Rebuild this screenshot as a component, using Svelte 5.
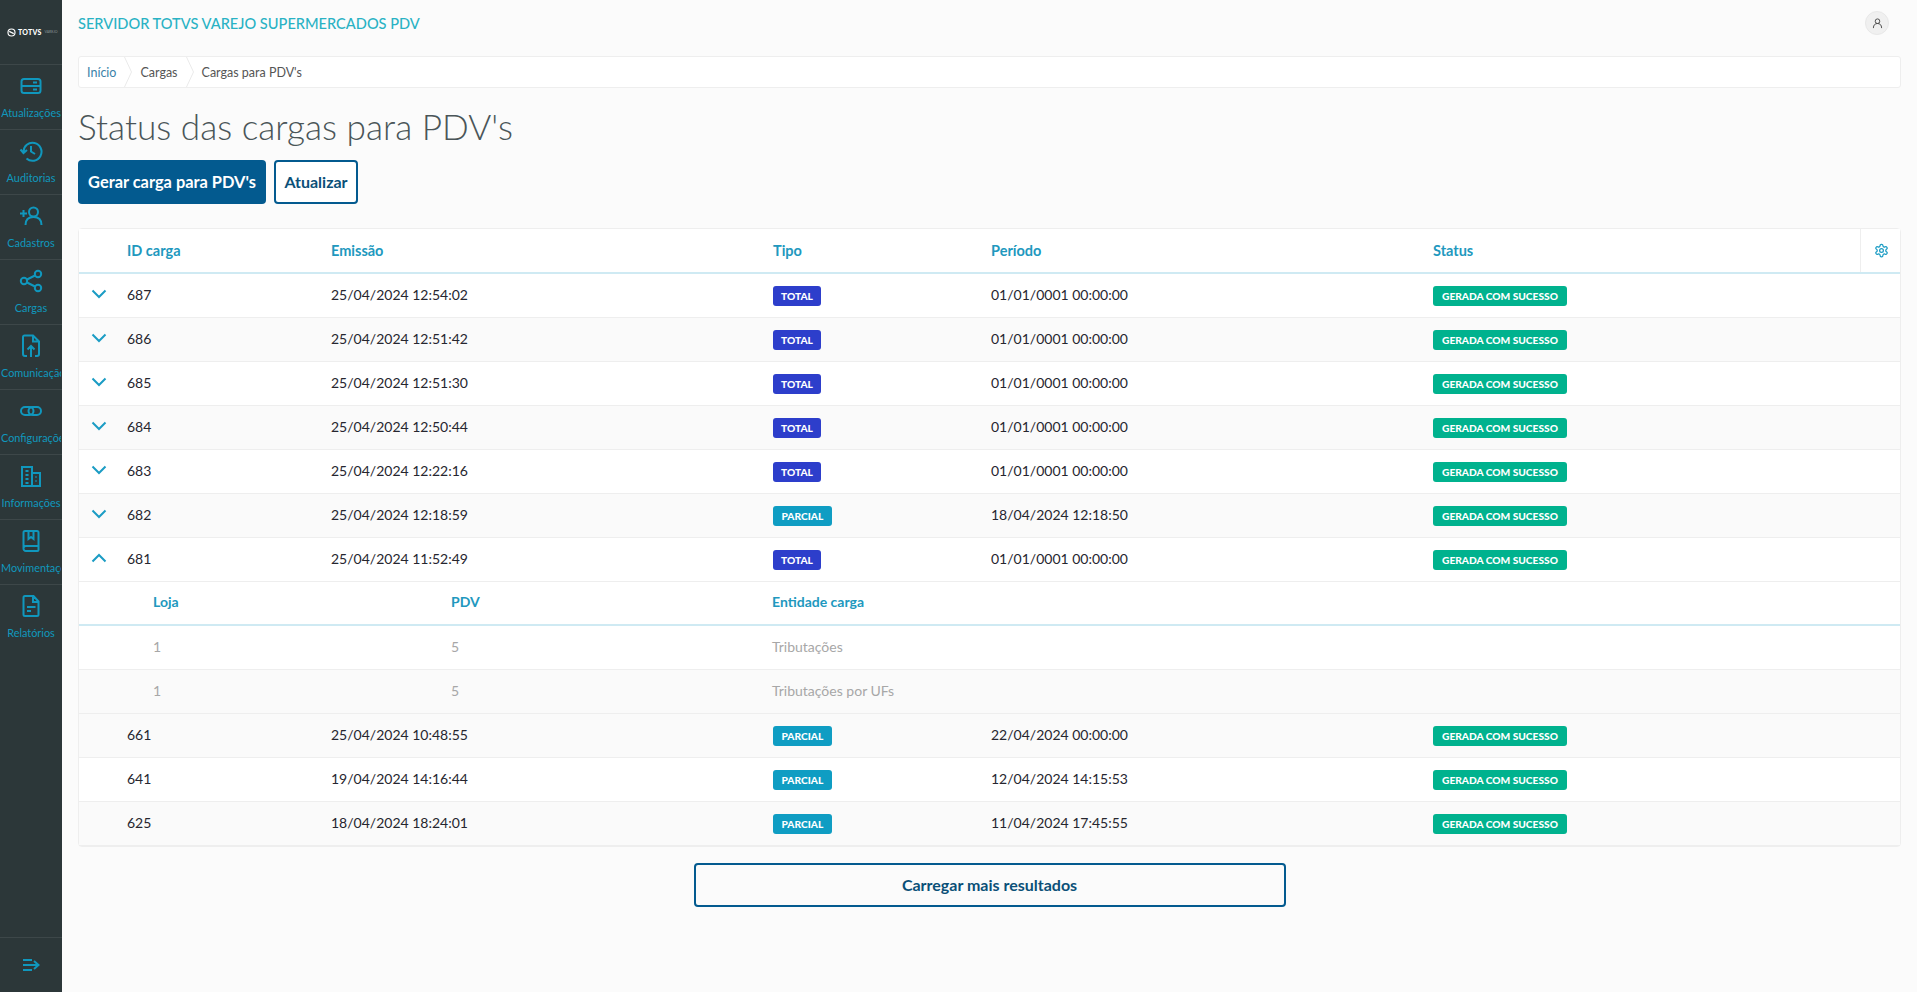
<script>
  const menu = [
    { label: 'Atualizações', icon: 'server' },
    { label: 'Auditorias', icon: 'history' },
    { label: 'Cadastros', icon: 'useradd' },
    { label: 'Cargas', icon: 'share' },
    { label: 'Comunicação PDV', icon: 'upload' },
    { label: 'Configurações', icon: 'link' },
    { label: 'Informações', icon: 'company' },
    { label: 'Movimentações', icon: 'book' },
    { label: 'Relatórios', icon: 'doc' }
  ];
  const before = [
    ['687', '25/04/2024 12:54:02', 'TOTAL', '01/01/0001 00:00:00'],
    ['686', '25/04/2024 12:51:42', 'TOTAL', '01/01/0001 00:00:00'],
    ['685', '25/04/2024 12:51:30', 'TOTAL', '01/01/0001 00:00:00'],
    ['684', '25/04/2024 12:50:44', 'TOTAL', '01/01/0001 00:00:00'],
    ['683', '25/04/2024 12:22:16', 'TOTAL', '01/01/0001 00:00:00'],
    ['682', '25/04/2024 12:18:59', 'PARCIAL', '18/04/2024 12:18:50']
  ];
  const after = [
    ['661', '25/04/2024 10:48:55', 'PARCIAL', '22/04/2024 00:00:00'],
    ['641', '19/04/2024 14:16:44', 'PARCIAL', '12/04/2024 14:15:53'],
    ['625', '18/04/2024 18:24:01', 'PARCIAL', '11/04/2024 17:45:55']
  ];
</script>

{#snippet cells(r)}
  <div class="cell">{r[0]}</div>
  <div class="cell">{r[1]}</div>
  <div class="cell"><span class="tag" class:parcial={r[2] === 'PARCIAL'}>{r[2]}</span></div>
  <div class="cell">{r[3]}</div>
  <div class="cell"><span class="tag ok">GERADA COM SUCESSO</span></div>
{/snippet}

{#snippet chevron(up)}
  <svg class="chev" viewBox="0 0 16 10" width="16" height="10" fill="none" stroke="#1b9cc4" stroke-width="2">
    <path d={up ? 'M1.500 8.500 8 2l6.500 6.500' : 'M1.500 1.500 8 8l6.500-6.500'} />
  </svg>
{/snippet}

{#snippet sep()}
  <svg class="sep" viewBox="0 0 8 30" width="8" height="30" fill="none" stroke="#eaeaea" stroke-width="1"><path d="M0.500 0 7.500 15 .5 30"/></svg>
{/snippet}

<div class="app">
  <aside class="side">
    <div class="logo">
      <svg viewBox="0 0 12 12" width="9" height="9" fill="none" stroke="#fff" stroke-width="1.500"><circle cx="6" cy="6" r="4.700"/><path d="M3 4.500 9 7.500"/></svg>
      <span class="logo-a">TOTVS</span><span class="logo-b">VAREJO</span>
    </div>
    {#each menu as m}
      <div class="item">
        <svg class="mi" viewBox="0 0 24 24" width="24" height="24" fill="none" stroke="#1097bd" stroke-width="2">
          {#if m.icon === 'server'}
            <rect x="2.500" y="5" width="19" height="14" rx="2.500"/><path d="M3 12h18M14 8.500h4M14 15.500h4"/>
          {:else if m.icon === 'history'}
            <path d="M4.500 13A9 9 0 1 1 7.500 19.500M1.500 10.500 4.500 14l3.500-3M12 7v5.500l4 2.500"/>
          {:else if m.icon === 'useradd'}
            <circle cx="14.500" cy="8" r="4.500"/><path d="M6.500 21c0-5 3-8 8-8s8 3 8 8M1 9.500h7M4.500 6v7"/>
          {:else if m.icon === 'share'}
            <circle cx="5" cy="12" r="3.200"/><circle cx="19" cy="5" r="3.200"/><circle cx="19" cy="19" r="3.200"/><path d="M8 10.500 16 6.500M8 13.500l8 4"/>
          {:else if m.icon === 'upload'}
            <path d="M8 22H6a2 2 0 0 1-2-2V3a1.500 1.500 0 0 1 1.500-1.500H14l6 6V20a2 2 0 0 1-2 2h-2M14 2v5.500h6M12 23v-11M8.500 15.500 12 12l3.500 3.500"/>
          {:else if m.icon === 'link'}
            <rect x="2" y="8" width="12.500" height="8" rx="4"/><rect x="9.500" y="8" width="12.500" height="8" rx="4"/>
          {:else if m.icon === 'company'}
            <path d="M3 22V3h10v19M13 9h8v13M2 22h20M6.500 7h3M6.500 11h3M6.500 15h3M6.500 19h3M16.500 13h1M16.500 17h1"/>
          {:else if m.icon === 'book'}
            <path d="M4.500 19V3.500a1.500 1.500 0 0 1 1.500-1.500h12a1.500 1.500 0 0 1 1.500 1.500V21a1 1 0 0 1-1 1H7a2.500 2.500 0 0 1-2.500-3 2.500 2.500 0 0 1 2.500-2h12.500M9.500 2v8l2.500-2 2.500 2V2"/>
          {:else}
            <path d="M4.500 3.500A1.500 1.500 0 0 1 6 2h8.500l5 5.500V20.500a1.500 1.500 0 0 1-1.500 1.500H6a1.500 1.500 0 0 1-1.500-1.500zM14 2v6h5.500M8 13h8.500M8 17h4"/>
          {/if}
        </svg>
        <div class="lbl">{m.label}</div>
      </div>
    {/each}
    <div class="collapse">
      <svg viewBox="0 0 18 12" width="18" height="12" fill="none" stroke="#1097bd" stroke-width="2"><path d="M1 1h9M1 6h15M1 11h9M12 2l4.500 4-4.500 4"/></svg>
    </div>
  </aside>

  <main class="main">
    <header class="top">
      <div class="brand">SERVIDOR TOTVS VAREJO SUPERMERCADOS PDV</div>
      <div class="avatar">
        <svg viewBox="0 0 12 12" width="11" height="11" fill="none" stroke="#444" stroke-width="1"><circle cx="6" cy="3.500" r="2.500"/><path d="M1.500 11c0-3.500 2-5 4.500-5s4.500 1.500 4.500 5"/></svg>
      </div>
    </header>

    <nav class="crumbs">
      <span class="crumb first">Início</span>
      {@render sep()}
      <span class="crumb">Cargas</span>
      {@render sep()}
      <span class="crumb">Cargas para PDV's</span>
    </nav>

    <h1>Status das cargas para PDV's</h1>

    <div class="actions">
      <button class="btn primary">Gerar carga para PDV's</button>
      <button class="btn outline">Atualizar</button>
    </div>

    <section class="table">
      <div class="row head">
        <div></div>
        <div class="cell">ID carga</div>
        <div class="cell">Emissão</div>
        <div class="cell">Tipo</div>
        <div class="cell">Período</div>
        <div class="cell">Status</div>
        <div class="gear">
          <svg viewBox="0 0 24 24" width="15" height="15" fill="none" stroke="#1b9cc4" stroke-width="2"><path d="M12.220 2h-.44a2 2 0 0 0-2 2v.18a2 2 0 0 1-1 1.730l-.43.25a2 2 0 0 1-2 0l-.15-.08a2 2 0 0 0-2.730.73l-.22.38a2 2 0 0 0 .73 2.730l.15.1a2 2 0 0 1 1 1.720v.51a2 2 0 0 1-1 1.740l-.15.09a2 2 0 0 0-.73 2.730l.22.38a2 2 0 0 0 2.730.73l.15-.08a2 2 0 0 1 2 0l.43.25a2 2 0 0 1 1 1.730V20a2 2 0 0 0 2 2h.44a2 2 0 0 0 2-2v-.18a2 2 0 0 1 1-1.730l.43-.25a2 2 0 0 1 2 0l.15.08a2 2 0 0 0 2.730-.73l.22-.39a2 2 0 0 0-.73-2.730l-.15-.08a2 2 0 0 1-1-1.740v-.5a2 2 0 0 1 1-1.740l.15-.09a2 2 0 0 0 .73-2.730l-.22-.38a2 2 0 0 0-2.730-.73l-.15.08a2 2 0 0 1-2 0l-.43-.25a2 2 0 0 1-1-1.730V4a2 2 0 0 0-2-2z"/><circle cx="12" cy="12" r="3"/></svg>
        </div>
      </div>

      {#each before as r, i}
        <div class="row" class:alt={i % 2 === 1}>
          <div class="exp">{@render chevron(false)}</div>
          {@render cells(r)}
          <div></div>
        </div>
      {/each}

      <div class="row">
        <div class="exp">{@render chevron(true)}</div>
        {@render cells(['681', '25/04/2024 11:52:49', 'TOTAL', '01/01/0001 00:00:00'])}
        <div></div>
      </div>

      <div class="sub subhead"><div>Loja</div><div>PDV</div><div>Entidade carga</div></div>
      <div class="sub"><div>1</div><div>5</div><div>Tributações</div></div>
      <div class="sub alt"><div>1</div><div>5</div><div>Tributações por UFs</div></div>

      {#each after as r, i}
        <div class="row" class:alt={i % 2 === 0}>
          <div class="exp"></div>
          {@render cells(r)}
          <div></div>
        </div>
      {/each}
    </section>

    <div class="more"><button class="btn outline wide">Carregar mais resultados</button></div>
  </main>
</div>

<style>
  :global(body) { margin: 0; background: #fbfbfb; font-family: "Lato", "Open Sans", sans-serif; }
  .app { display: flex; height: 992px; overflow: hidden; }

  .side { width: 62px; flex: none; background: #2c3739; display: flex; flex-direction: column; }
  .logo { height: 64px; display: flex; align-items: center; padding-left: 7px; gap: 2px; box-sizing: border-box; color: #fff; white-space: nowrap; overflow: hidden; }
  .logo-a { font-size: 7px; font-weight: 900; letter-spacing: .2px; }
  .logo-b { font-size: 3.500px; color: #8b9698; margin-left: 1px; }
  .item { height: 65px; box-sizing: border-box; border-top: 1px solid #3d4749; display: flex; flex-direction: column; align-items: center; padding-top: 9px; }
  .mi { flex: none; display: block; }
  .lbl { margin-top: 7px; width: 60px; overflow: hidden; white-space: nowrap; text-align: center; font-size: 10.900px; line-height: 16px; color: #1097bd; }
  .collapse { margin-top: auto; height: 55px; box-sizing: border-box; border-top: 1px solid #3d4749; display: flex; align-items: center; justify-content: center; }

  .main { flex: 1; min-width: 0; padding: 0 16px; box-sizing: border-box; }
  .top { height: 56px; display: flex; justify-content: space-between; align-items: flex-start; box-sizing: border-box; padding-top: 11px; }
  .brand { font-size: 14.600px; line-height: 24px; padding-top: 1px; color: #29b2c4; font-weight: 500; }
  .avatar { width: 24px; height: 24px; margin-right: 12px; border-radius: 50%; background: #f0f0f0; border: 1px solid #e8e8e8; box-sizing: border-box; display: flex; align-items: center; justify-content: center; }

  .crumbs { height: 32px; box-sizing: border-box; background: #fff; border: 1px solid #eee; border-radius: 3px; display: flex; align-items: center; font-size: 12.500px; color: #555; overflow: hidden; padding-left: 8px; gap: 8px; }
  .crumb { white-space: nowrap; }
  .crumb.first { color: #3b82a8; }
  .sep { flex: none; display: block; }

  h1 { margin: 12px 0 0; font-size: 35.200px; line-height: 52px; font-weight: 300; color: #4a5558; }
  .actions { display: flex; gap: 8px; margin-top: 8px; }
  .btn { height: 44px; box-sizing: border-box; border-radius: 4px; font-family: inherit; font-size: 16px; font-weight: 700; padding: 0 0 2px; }
  .primary { background: #035a8f; color: #fff; border: 0; width: 188px; font-size: 16.400px; }
  .outline { background: #fff; color: #0b5078; border: 2px solid #035a8f; width: 84px; }

  .table { margin-top: 24px; background: #fff; border: 1px solid #eee; border-radius: 4px; }
  .row { height: 44px; box-sizing: border-box; display: grid; grid-template-columns: 48px 204px 442px 218px 442px 1fr 40px; border-bottom: 1px solid #eee; font-size: 14px; color: #26262f; background: #fff; }
  .alt { background: #fafafa; }
  .cell { display: flex; align-items: center; white-space: nowrap; padding-bottom: 2px; }
  .exp { display: flex; align-items: center; justify-content: center; padding-bottom: 3px; padding-right: 8px; }
  .chev { display: block; }
  .row.head { height: 45px; border-bottom: 2px solid #cfeaf3; color: #2198be; font-weight: 700; font-size: 14.500px; }
  .row.head .cell { padding-bottom: 0; }
  .gear { border-left: 1px solid #eee; display: flex; align-items: center; justify-content: center; padding-left: 1px; }
  .tag { height: 20px; box-sizing: border-box; border-radius: 3px; padding: 0 8px; background: #2d3ecb; color: #fff; font-size: 10.200px; font-weight: 900; line-height: 20px; display: inline-block; margin-top: 2px; }
  .tag.parcial { background: #0f9dc3; padding: 0 8.500px; }
  .tag.ok { background: #00b28e; padding: 0 9px; }

  .sub { height: 44px; box-sizing: border-box; display: grid; grid-template-columns: 298px 321px 1fr; padding-left: 74px; padding-bottom: 2px; border-bottom: 1px solid #eee; font-size: 14px; color: #a7a7a7; align-items: center; background: #fff; }
  .sub > div { white-space: nowrap; }
  .sub.alt { background: #fafafa; }
  .sub.subhead { color: #2198be; font-weight: 700; border-bottom: 2px solid #cfeaf3; padding-bottom: 3px; }

  .more { display: flex; justify-content: center; margin-top: 16px; }
  .wide { width: 592px; background: #fbfbfb; }
</style>
